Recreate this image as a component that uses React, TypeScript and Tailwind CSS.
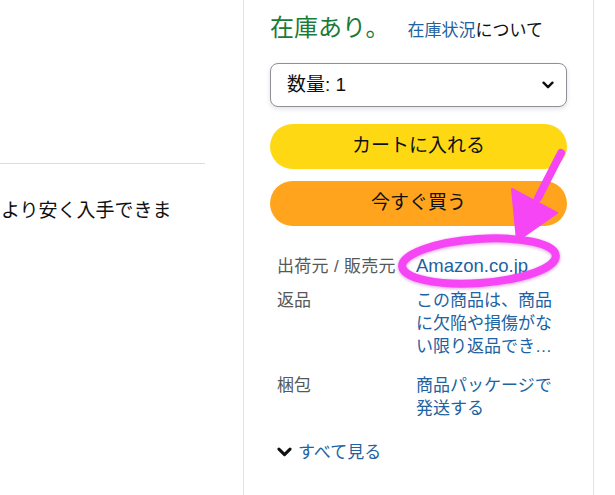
import React from "react";

const FONT = { fontFamily: '"Liberation Sans", "Noto Sans CJK JP", sans-serif' };

function Chevron({ className }: { className?: string }) {
  return (
    <svg viewBox="0 0 14 9" className={className} fill="none">
      <path d="M1.8 1.8 L7 7 L12.2 1.8" stroke="currentColor" strokeWidth="2.8" strokeLinecap="round" strokeLinejoin="round" />
    </svg>
  );
}

export default function App() {
  return (
    <div className="relative w-[615px] h-[495px] overflow-hidden bg-white flex text-[#0f1111]" style={FONT}>
      {/* left column */}
      <div className="w-[243px] shrink-0 pt-[163px]">
        <div className="w-[205px] h-px bg-[#dddddd]" />
        <div className="mt-[34px] text-[19px] leading-[26px] whitespace-nowrap overflow-hidden pl-[1px]">
          より安く入手できま
        </div>
      </div>

      {/* buy box */}
      <div className="w-[351px] shrink-0 border-x border-[#e3e3e3] px-[26px] pt-[13px]">
        <div className="flex items-baseline whitespace-nowrap">
          <span className="text-[24px] leading-[30px] text-[#1b7a36]">在庫あり。</span>
          <span className="ml-[18px] text-[17px]">
            <span className="text-[#2162a1]">在庫状況</span>について
          </span>
        </div>

        <div className="mt-[19px] h-[44px] rounded-[8px] border border-[#8d9096] bg-white shadow-[0_2px_5px_rgba(15,17,17,0.12)] flex items-center justify-between pl-[16px] pr-[12px]">
          <span className="text-[19px] pt-[2px]">数量: 1</span>
          <Chevron className="w-[12px] h-[8px] text-[#0f1111]" />
        </div>

        <div className="mt-[17px] h-[45px] rounded-full bg-[#ffd814] flex items-center justify-center text-[19px]">
          カートに入れる
        </div>
        <div className="mt-[12px] h-[45px] rounded-full bg-[#ffa41c] flex items-center justify-center text-[19px]">
          今すぐ買う
        </div>

        <div className="mt-[28px] pl-[7px] text-[17px] leading-[23px]">
          <div className="grid grid-cols-[139px_140px] items-baseline">
            <div className="text-[#565959] whitespace-nowrap tracking-[0.3px]">出荷元 / 販売元</div>
            <div className="text-[#2162a1] text-[18.5px]">Amazon.co.jp</div>
          </div>
          <div className="mt-[11px] grid grid-cols-[139px_140px]">
            <div className="text-[#565959]">返品</div>
            <div className="text-[#2162a1] line-clamp-3">この商品は、商品に欠陥や損傷がない限り返品できません</div>
          </div>
          <div className="mt-[16px] grid grid-cols-[139px_140px]">
            <div className="text-[#565959]">梱包</div>
            <div className="text-[#2162a1]">商品パッケージで発送する</div>
          </div>
          <div className="mt-[21px] flex items-center">
            <Chevron className="w-[15px] h-[10px] text-[#0f1111]" />
            <span className="ml-[6px] text-[#2162a1]">すべて見る</span>
          </div>
        </div>
      </div>

      {/* annotation */}
      <svg className="absolute inset-0 pointer-events-none" width="615" height="495" viewBox="0 0 615 495">
        <defs>
          <filter id="glow" x="-20%" y="-50%" width="140%" height="200%">
            <feGaussianBlur stdDeviation="1.5" />
          </filter>
        </defs>
        <g opacity="0.35" filter="url(#glow)">
          <ellipse cx="479" cy="262" rx="77" ry="22" transform="rotate(-4 479 262)" fill="none" stroke="#b020b0" strokeWidth="9" />
        </g>
        <g>
          <line x1="561" y1="153" x2="538" y2="198" stroke="#f545f5" strokeWidth="8" strokeLinecap="round" />
          <polygon points="512,189 557,213 517,241" fill="#f545f5" stroke="#f545f5" strokeWidth="2" strokeLinejoin="round" />
          <ellipse cx="479" cy="261" rx="77" ry="22" transform="rotate(-4 479 261)" fill="none" stroke="#f545f5" strokeWidth="8" />
        </g>
      </svg>
    </div>
  );
}
